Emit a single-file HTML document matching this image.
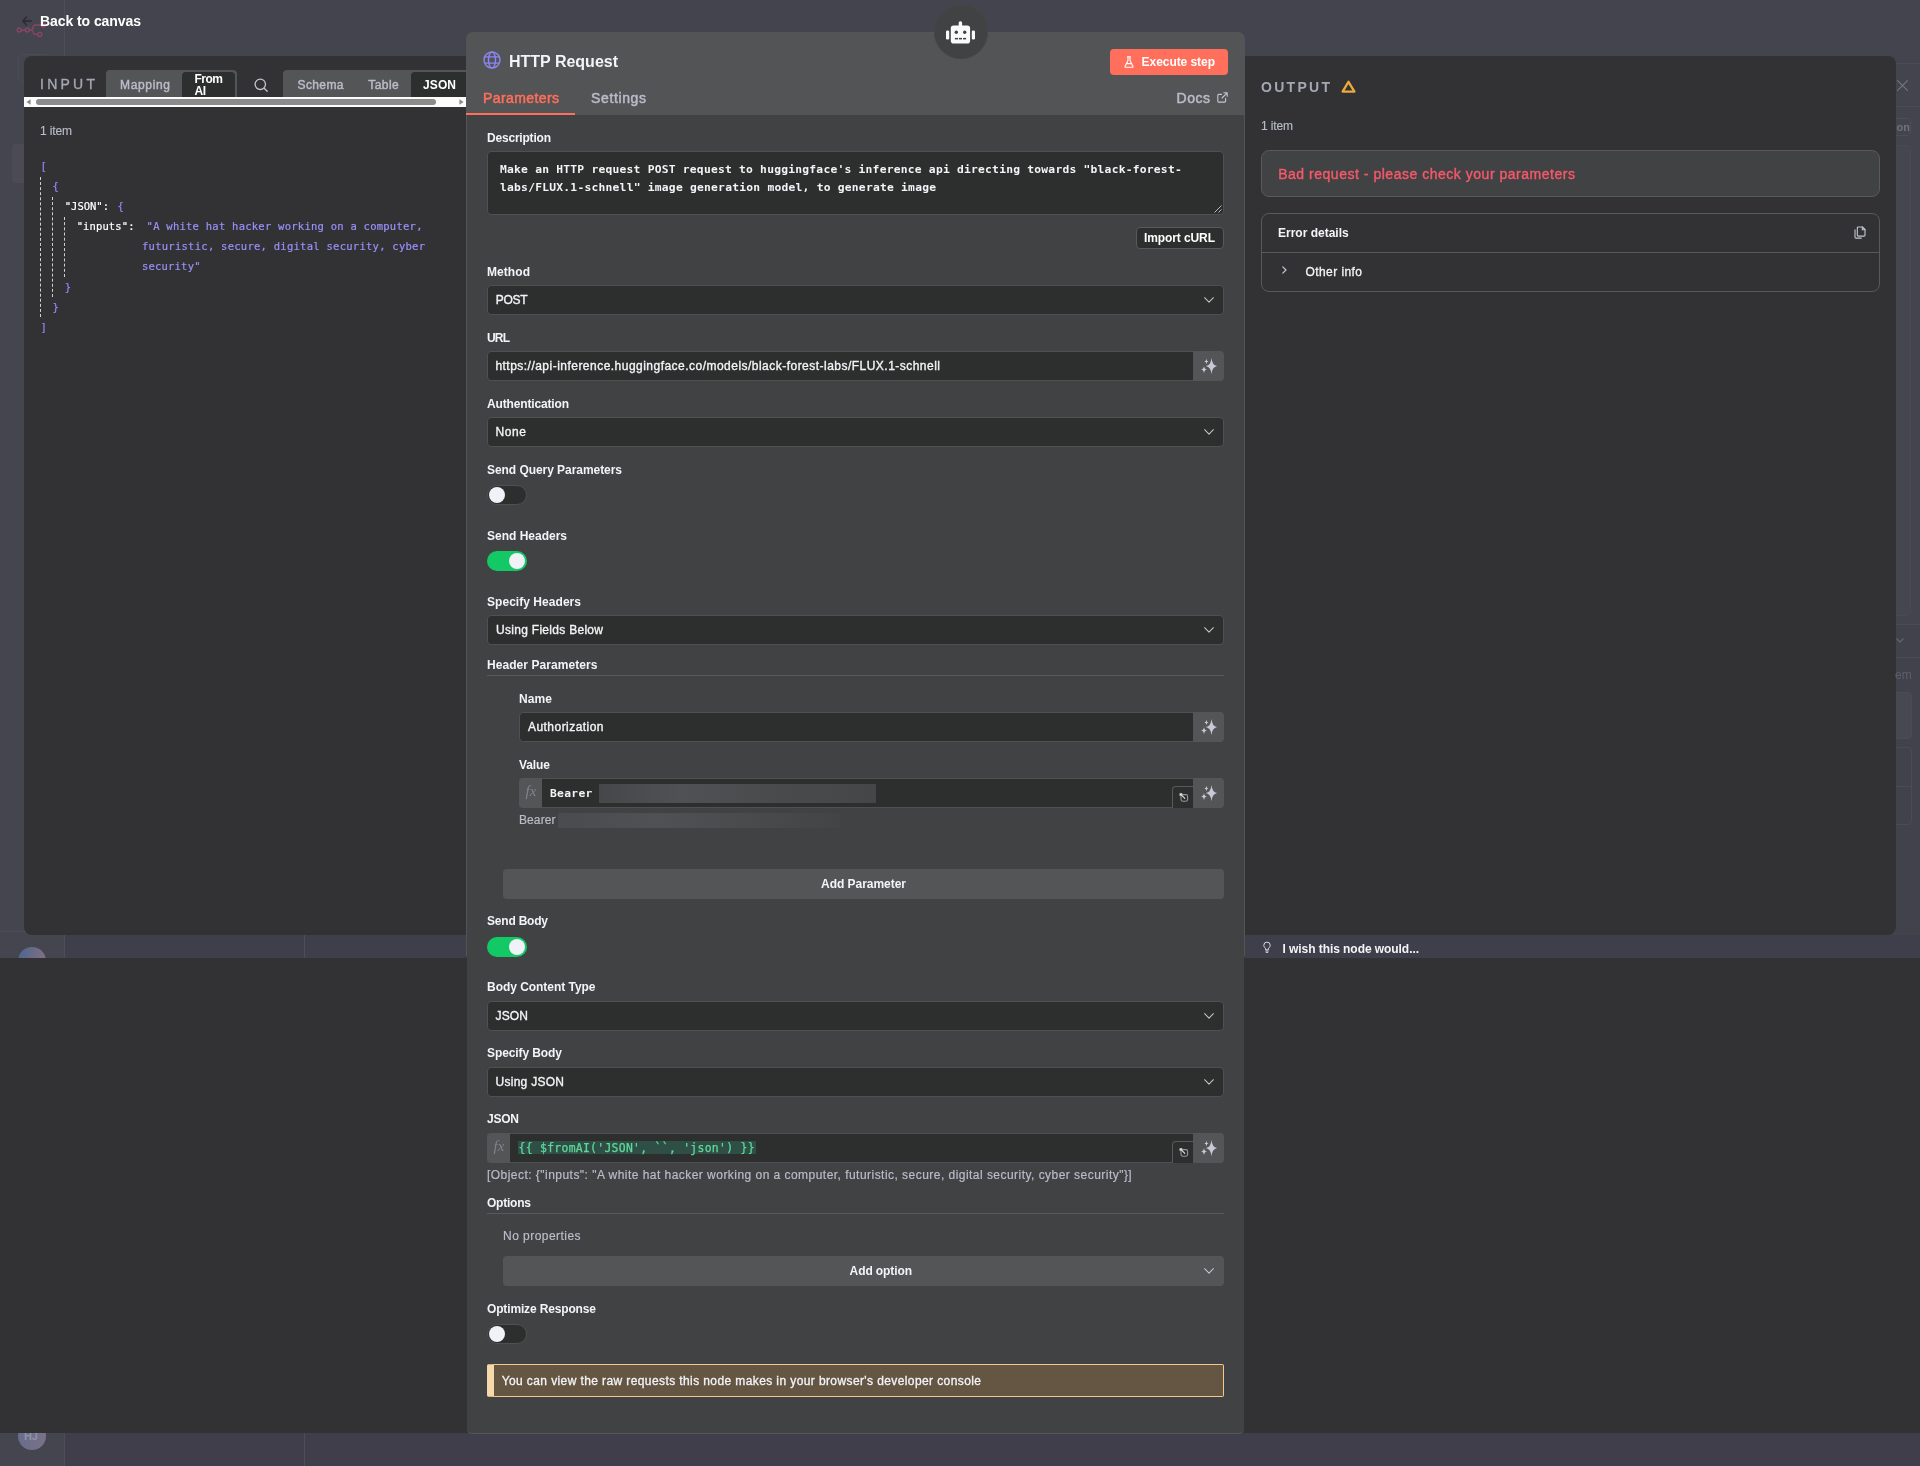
<!DOCTYPE html>
<html lang="en">
<head>
<meta charset="utf-8">
<title>HTTP Request - n8n</title>
<style>
html,body{margin:0;padding:0}
body{width:1920px;height:1466px;position:relative;overflow:hidden;background:#44444e;font-family:"Liberation Sans",sans-serif}
.a{position:absolute;box-sizing:border-box}
.t{position:absolute;white-space:pre;line-height:20px;height:20px}
svg{position:absolute;overflow:visible}
.inp{background:#2d2e2e;border:1px solid #4f5052;border-radius:4px}
.sel{background:#2d2e2e;border:1px solid #4f5052;border-radius:4px;left:487px;width:737px;height:30px}
.spk{background:#545557;border-radius:0 4px 4px 0;width:31px;height:30px;left:1193px}
.tg{width:40px;height:20px;border-radius:10px;left:487px}
.tg i{position:absolute;top:2px;width:16px;height:16px;border-radius:8px;background:#f1f2f8}
.off{background:#2d2e2e;border:1px solid #4f5052}.off i{left:1px;top:1px}
.on{background:#13c965}.on i{left:22px}
.hr{height:1px;background:#58595b;left:487px;width:737px}
.btn{background:#545557;border-radius:4px;left:503px;width:721px;height:30px}
.fx{background:#545557;border-radius:4px 0 0 4px;height:30px}
.opn{border:1px solid #58595b;border-right:0;border-bottom:0;border-radius:4px 0 0 0;background:#2d2e2e;left:1172px;width:21px;height:22px}
.blur{filter:blur(.3px)}
</style>
</head>
<body>
<!-- dimmed canvas background -->
<div class="a" style="left:0;top:0;width:64px;height:958px;background:#45454f"></div>
<div class="a" style="left:64px;top:0;width:1px;height:958px;background:#4d4d58"></div>
<div class="a" style="left:0;top:1433px;width:64px;height:33px;background:#45454f"></div>
<div class="a" style="left:65px;top:935px;width:1855px;height:23px;background:#3f3f4b"></div>
<div class="a" style="left:65px;top:1433px;width:1855px;height:33px;background:#3f3e4a"></div>
<div class="a" style="left:64px;top:1433px;width:1px;height:33px;background:#4d4d58"></div>
<div class="a" style="left:304px;top:935px;width:1px;height:23px;background:#4d4d58"></div>
<div class="a" style="left:304px;top:1433px;width:1px;height:33px;background:#4d4d58"></div>
<div class="a" style="left:0;top:931px;width:64px;height:1px;background:#4d4d58"></div>
<div class="a" style="left:18px;top:54px;width:30px;height:28px;border:1px solid #4b4b56;border-radius:4px"></div>
<div class="a" style="left:12px;top:144px;width:40px;height:39px;background:#4b4a55;border-radius:4px"></div>
<div class="a" style="left:1896px;top:63px;width:24px;height:1px;background:#4b4b56"></div>
<div class="a" style="left:1896px;top:106px;width:24px;height:1px;background:#4b4b56"></div>
<div class="a" style="left:1860px;top:118px;width:51px;height:18px;border:1px solid #4d4d58;border-radius:4px"></div>
<div class="a" style="left:1860px;top:145px;width:51px;height:471px;border:1px solid #4a4a55;background:#464650;border-radius:4px"></div>
<div class="a" style="left:1896px;top:625px;width:24px;height:310px;background:#42424d"></div>
<div class="a" style="left:1896px;top:624px;width:24px;height:1px;background:#4b4b56"></div>
<div class="a" style="left:1896px;top:657px;width:24px;height:1px;background:#4b4b56"></div>
<div class="a" style="left:1860px;top:692px;width:52px;height:47px;background:#484852;border:1px solid #4b4b56;border-radius:4px"></div>
<div class="a" style="left:1860px;top:747px;width:52px;height:78px;border:1px solid #4b4b56;border-radius:4px"></div>
<div class="a" style="left:1860px;top:786px;width:52px;height:1px;background:#4b4b56"></div>
<svg style="left:1895.5px;top:638px" width="8" height="5" viewBox="0 0 8 5" fill="none" stroke="#62626e" stroke-width="1.3"><path d="M0.5 0.5 4 4 7.5 0.5"/></svg>
<svg style="left:22px;top:16px" width="10" height="10" viewBox="0 0 10 10" fill="none" stroke="#2a2a2f" stroke-width="1.3" stroke-linecap="round" stroke-linejoin="round"><path d="M9.3 5H0.8M4.6 1 0.8 5 4.6 9"/></svg>
<!-- n8n logo (dim) -->
<svg style="left:0;top:0" width="64" height="48" viewBox="0 0 64 48" fill="none" stroke="#8a4661" stroke-width="1.3"><circle cx="19.2" cy="30" r="2"/><circle cx="27.3" cy="30" r="2"/><circle cx="39.8" cy="34.4" r="2"/><circle cx="43.3" cy="25" r="2"/><path d="M21.2 30h4.1M29.3 30h1.2q2.6 0 2.6-2.5 0-2.5 2.6-2.5h5.6M31.4 30.2q1.8 0.6 1.8 2.1 0 2.1 2.4 2.1h2.2"/></svg>
<!-- avatars -->
<div class="a" style="left:18px;top:947px;width:28px;height:11px;overflow:hidden"><div class="a" style="left:0;top:0;width:28px;height:28px;border-radius:14px;background:linear-gradient(100deg,#4a6690,#8c6f80)"></div></div>
<div class="a" style="left:18px;top:1433px;width:28px;height:17px;overflow:hidden"><div class="a" style="left:0;top:-11px;width:28px;height:28px;border-radius:14px;background:linear-gradient(100deg,#666d8a,#7b7189)"></div></div>
<div class="t" style="left:24px;top:1426px;font-size:11px;font-weight:700;color:#9092a6;letter-spacing:-.2px">HJ</div>

<!-- dark band -->
<div class="a" style="left:0;top:958px;width:1920px;height:475px;background:#323234"></div>

<!-- INPUT panel -->
<div class="a" style="left:24px;top:56px;width:450px;height:879px;background:#323234;border-radius:8px 0 0 8px"></div>
<div class="a" style="left:106px;top:70px;width:131px;height:30px;background:#545557;border-radius:4px 4px 0 0"></div>
<div class="a" style="left:182px;top:72px;width:53px;height:28px;background:#2d2e2e;border-radius:4px 4px 0 0"></div>
<div class="a" style="left:283px;top:70px;width:190px;height:30px;background:#545557;border-radius:4px 0 0 0"></div>
<div class="a" style="left:411px;top:72px;width:60px;height:28px;background:#2d2e2e;border-radius:4px 0 0 0"></div>
<svg style="left:254px;top:78px" width="14" height="14" viewBox="0 0 14 14" fill="none" stroke="#c3c6d2" stroke-width="1.3" stroke-linecap="round"><circle cx="6.3" cy="6.3" r="5.2"/><path d="M10.2 10.2 13.2 13.2"/></svg>
<!-- scrollbar -->
<div class="a" style="left:24px;top:97px;width:442px;height:10px;background:#fcfcfc"></div>
<div class="a" style="left:36px;top:99px;width:400px;height:6px;background:#8b8b8b;border-radius:3px"></div>
<svg style="left:26px;top:99px" width="5" height="6" viewBox="0 0 5 6"><path d="M4.6 0.2V5.8L0.4 3z" fill="#8b8b8b"/></svg>
<svg style="left:458.5px;top:99px" width="5" height="6" viewBox="0 0 5 6"><path d="M0.4 0.2V5.8L4.6 3z" fill="#8b8b8b"/></svg>
<!-- json guide lines -->
<div class="a" style="left:40px;top:177px;width:0;height:140px;border-left:1px dashed #cfcfd6"></div>
<div class="a" style="left:52px;top:197px;width:0;height:100px;border-left:1px dashed #cfcfd6"></div>
<div class="a" style="left:64px;top:217px;width:0;height:60px;border-left:1px dashed #cfcfd6"></div>

<!-- OUTPUT panel -->
<div class="a" style="left:1236px;top:56px;width:660px;height:879px;background:#323234;border-radius:0 8px 8px 0"></div>
<svg style="left:1340.6px;top:79.6px" width="15" height="13" viewBox="0 0 15 13" fill="none" stroke="#eda93c" stroke-width="2.3" stroke-linejoin="round"><path d="M7.5 1.8 13.4 11.6H1.6z"/></svg>
<div class="a" style="left:1261px;top:150px;width:619px;height:47px;background:#414244;border:1px solid #58595b;border-radius:8px"></div>
<div class="a" style="left:1261px;top:213px;width:619px;height:79px;border:1px solid #58595b;border-radius:8px"></div>
<div class="a" style="left:1262px;top:252px;width:617px;height:1px;background:#58595b"></div>
<svg style="left:1854px;top:226px" width="12" height="13" viewBox="0 0 12 13" fill="none" stroke="#c3c6d2" stroke-width="1.1" stroke-linejoin="round" stroke-linecap="round"><path d="M4.2 1h4.3l2.5 2.5v5.7a.9.9 0 0 1-.9.9H4.2a.9.9 0 0 1-.9-.9V1.9a.9.9 0 0 1 .9-.9z"/><path d="M8.3 1v2.7H11"/><path d="M1 3.8v7.4a.9.9 0 0 0 .9.9h5.4"/></svg>
<svg style="left:1281.7px;top:266.2px" width="5" height="8" viewBox="0 0 5 8" fill="none" stroke="#c3c6d2" stroke-width="1.2" stroke-linecap="round" stroke-linejoin="round"><path d="M0.8 0.8 4 4 0.8 7.2"/></svg>
<svg style="left:1896.5px;top:79.5px" width="11" height="11" viewBox="0 0 11 11" fill="none" stroke="#74747f" stroke-width="1.2" stroke-linecap="round"><path d="M0.6 0.6 10.4 10.4M10.4 0.6 0.6 10.4"/></svg>
<!-- wish -->
<svg style="left:1263px;top:940.5px" width="8" height="12" viewBox="0 0 8 12" fill="none" stroke="#d8d9e2" stroke-width="1" stroke-linecap="round" stroke-linejoin="round"><path d="M2.6 8.4V7.3C1.6 6.7 0.8 5.6 0.8 4.3a3.2 3.2 0 0 1 6.4 0c0 1.3-.8 2.4-1.8 3v1.1z"/><path d="M2.8 10h2.4M3.2 11.4h1.6"/></svg>

<!-- MAIN panel -->
<div class="a" style="left:466px;top:32px;width:779px;height:924px;background:#535456;border-radius:7px 7px 0 0"></div>
<div class="a" style="left:467px;top:115px;width:777px;height:1319px;background:#414244;border-bottom:1px solid #55565a;border-radius:0 0 5px 5px"></div>
<div class="a" style="left:466px;top:113px;width:109px;height:2px;background:#ff6f5c"></div>
<!-- robot badge -->
<div class="a" style="left:933.5px;top:4.3px;width:54.2px;height:54.4px;border-radius:50%;background:#414244;box-shadow:inset 0 0 0 .8px #47484b"></div>
<svg style="left:946px;top:20.6px" width="29" height="24" viewBox="0 0 29 24" fill="#fbfbfd"><rect x="12.7" y="0.2" width="3.4" height="6" rx="1.6"/><rect x="4.8" y="4.5" width="19.3" height="18.1" rx="2.8"/><rect x="0" y="9.5" width="3.2" height="9.1" rx="1.3"/><rect x="25.8" y="9.5" width="3.2" height="9.1" rx="1.3"/><circle cx="10.3" cy="11.2" r="1.7" fill="#414244"/><circle cx="18.7" cy="11.2" r="1.7" fill="#414244"/><rect x="8.9" y="16.9" width="3.1" height="1.5" fill="#414244"/><rect x="12.9" y="16.9" width="3.1" height="1.5" fill="#414244"/><rect x="17" y="16.9" width="3.1" height="1.5" fill="#414244"/></svg>
<!-- globe -->
<svg style="left:483px;top:51px" width="18" height="18" viewBox="0 0 18 18" fill="none" stroke="#8b85f6" stroke-width="1.4"><circle cx="9" cy="9" r="8"/><ellipse cx="9" cy="9" rx="3.5" ry="8"/><path d="M1.6 5.9h14.8M1.6 12.1h14.8" stroke-width="1.3"/></svg>
<!-- execute -->
<div class="a" style="left:1110px;top:49px;width:118px;height:26px;background:#ff6f5c;border-radius:4px"></div>
<svg style="left:1123.5px;top:56px" width="10" height="12" viewBox="0 0 10 12" fill="none" stroke="#fff" stroke-width="1.1" stroke-linecap="round" stroke-linejoin="round"><path d="M3.4 0.8h3.2M4 0.8v3.6L1 10.2a.7.7 0 0 0 .6 1h6.8a.7.7 0 0 0 .6-1L6 4.4V0.8"/><path d="M2.4 7.6h5.2"/></svg>
<!-- docs link icon -->
<svg style="left:1216.5px;top:91.5px" width="11" height="11" viewBox="0 0 11 11" fill="none" stroke="#c3c6d2" stroke-width="1.1" stroke-linecap="round" stroke-linejoin="round"><path d="M6.8 0.8h3.4v3.4M10.2 0.8 5 6M8.6 6.4v2.7a1 1 0 0 1-1 1H1.8a1 1 0 0 1-1-1V3.4a1 1 0 0 1 1-1h2.8"/></svg>

<!-- Description textarea -->
<div class="a inp" style="left:487px;top:151px;width:737px;height:64px"></div>
<svg style="left:1214px;top:205px" width="8" height="8" viewBox="0 0 8 8" stroke="#b5b6bc" stroke-width="1"><path d="M7.5 0.5 0.5 7.5M7.5 4.5 4.5 7.5"/></svg>
<div class="a" style="left:1136px;top:227px;width:88px;height:21.5px;background:#2d2e2e;border:1px solid #58595c;border-radius:4px"></div>

<!-- selects / inputs -->
<div class="a sel" style="top:285px"></div>
<div class="a inp" style="left:487px;top:351px;width:707px;height:30px;border-radius:4px 0 0 4px"></div>
<div class="a spk" style="top:351px"></div>
<div class="a sel" style="top:417px"></div>
<div class="a tg off" style="top:485px"><i></i></div>
<div class="a tg on" style="top:551px"><i></i></div>
<div class="a sel" style="top:615px"></div>
<div class="a hr" style="top:675px"></div>
<div class="a inp" style="left:519px;top:712px;width:675px;height:30px;border-radius:4px 0 0 4px"></div>
<div class="a spk" style="top:712px"></div>
<!-- value expression -->
<div class="a inp" style="left:519px;top:778px;width:675px;height:30px;border-radius:4px 0 0 4px"></div>
<div class="a fx" style="left:519px;top:778px;width:23px"></div>
<div class="a opn" style="top:786px"></div>
<div class="a spk" style="top:778px"></div>
<div class="a blur" style="left:599px;top:784px;width:277px;height:19px;background:linear-gradient(90deg,#464749,#505154 30%,#4a4b4d 60%,#454648)"></div>
<div class="a blur" style="left:558px;top:813px;width:282px;height:15px;background:linear-gradient(90deg,#4a4b4e,#505154 35%,#494a4c 70%,#434446)"></div>
<div class="a btn" style="top:869px"></div>
<div class="a tg on" style="top:937px"><i></i></div>
<div class="a sel" style="top:1001px"></div>
<div class="a sel" style="top:1067px"></div>
<!-- json expression -->
<div class="a inp" style="left:487px;top:1133px;width:707px;height:30px;border-radius:4px 0 0 4px"></div>
<div class="a fx" style="left:487px;top:1133px;width:23px"></div>
<div class="a" style="left:517.5px;top:1141px;width:238px;height:13px;background:#2f4f46"></div>
<div class="a opn" style="top:1141px"></div>
<div class="a spk" style="top:1133px"></div>
<div class="a hr" style="top:1213px"></div>
<div class="a btn" style="top:1256px"></div>
<div class="a tg off" style="top:1324px"><i></i></div>
<div class="a" style="left:487px;top:1364px;width:737px;height:33px;background:#645643;border:1px solid #f2c88d;border-left:7px solid #f6d9ab;border-radius:2px"></div>

<!-- chevrons -->
<svg style="left:1204px;top:297.0px" width="10" height="6" viewBox="0 0 10 6" fill="none" stroke="#c3c6d2" stroke-width="1.05" stroke-linecap="round" stroke-linejoin="round"><path d="M0.6 0.7 5 5.1 9.4 0.7"/></svg>
<svg style="left:1204px;top:429.0px" width="10" height="6" viewBox="0 0 10 6" fill="none" stroke="#c3c6d2" stroke-width="1.05" stroke-linecap="round" stroke-linejoin="round"><path d="M0.6 0.7 5 5.1 9.4 0.7"/></svg>
<svg style="left:1204px;top:627.0px" width="10" height="6" viewBox="0 0 10 6" fill="none" stroke="#c3c6d2" stroke-width="1.05" stroke-linecap="round" stroke-linejoin="round"><path d="M0.6 0.7 5 5.1 9.4 0.7"/></svg>
<svg style="left:1204px;top:1013.0px" width="10" height="6" viewBox="0 0 10 6" fill="none" stroke="#c3c6d2" stroke-width="1.05" stroke-linecap="round" stroke-linejoin="round"><path d="M0.6 0.7 5 5.1 9.4 0.7"/></svg>
<svg style="left:1204px;top:1079.0px" width="10" height="6" viewBox="0 0 10 6" fill="none" stroke="#c3c6d2" stroke-width="1.05" stroke-linecap="round" stroke-linejoin="round"><path d="M0.6 0.7 5 5.1 9.4 0.7"/></svg>
<svg style="left:1204px;top:1268.0px" width="10" height="6" viewBox="0 0 10 6" fill="none" stroke="#c3c6d2" stroke-width="1.05" stroke-linecap="round" stroke-linejoin="round"><path d="M0.6 0.7 5 5.1 9.4 0.7"/></svg>
<svg style="left:1193px;top:351px" width="31" height="30" viewBox="0 0 31 30"><path d="M18.50 6.90Q19.17 14.12 24.10 15.10Q19.17 16.08 18.50 23.30Q17.83 16.08 12.90 15.10Q17.83 14.12 18.50 6.90ZM11.00 14.90Q11.32 18.23 14.20 18.60Q11.32 18.97 11.00 22.30Q10.68 18.97 7.80 18.60Q10.68 18.23 11.00 14.90ZM13.40 7.80Q13.56 10.28 15.40 10.50Q13.56 10.72 13.40 13.20Q13.24 10.72 11.40 10.50Q13.24 10.28 13.40 7.80Z" fill="#c6c9d6"/></svg><svg style="left:1193px;top:712px" width="31" height="30" viewBox="0 0 31 30"><path d="M18.50 6.90Q19.17 14.12 24.10 15.10Q19.17 16.08 18.50 23.30Q17.83 16.08 12.90 15.10Q17.83 14.12 18.50 6.90ZM11.00 14.90Q11.32 18.23 14.20 18.60Q11.32 18.97 11.00 22.30Q10.68 18.97 7.80 18.60Q10.68 18.23 11.00 14.90ZM13.40 7.80Q13.56 10.28 15.40 10.50Q13.56 10.72 13.40 13.20Q13.24 10.72 11.40 10.50Q13.24 10.28 13.40 7.80Z" fill="#c6c9d6"/></svg><svg style="left:1193px;top:778px" width="31" height="30" viewBox="0 0 31 30"><path d="M18.50 6.90Q19.17 14.12 24.10 15.10Q19.17 16.08 18.50 23.30Q17.83 16.08 12.90 15.10Q17.83 14.12 18.50 6.90ZM11.00 14.90Q11.32 18.23 14.20 18.60Q11.32 18.97 11.00 22.30Q10.68 18.97 7.80 18.60Q10.68 18.23 11.00 14.90ZM13.40 7.80Q13.56 10.28 15.40 10.50Q13.56 10.72 13.40 13.20Q13.24 10.72 11.40 10.50Q13.24 10.28 13.40 7.80Z" fill="#c6c9d6"/></svg><svg style="left:1193px;top:1133px" width="31" height="30" viewBox="0 0 31 30"><path d="M18.50 6.90Q19.17 14.12 24.10 15.10Q19.17 16.08 18.50 23.30Q17.83 16.08 12.90 15.10Q17.83 14.12 18.50 6.90ZM11.00 14.90Q11.32 18.23 14.20 18.60Q11.32 18.97 11.00 22.30Q10.68 18.97 7.80 18.60Q10.68 18.23 11.00 14.90ZM13.40 7.80Q13.56 10.28 15.40 10.50Q13.56 10.72 13.40 13.20Q13.24 10.72 11.40 10.50Q13.24 10.28 13.40 7.80Z" fill="#c6c9d6"/></svg>
<svg style="left:1172px;top:786px" width="21" height="21" viewBox="0 0 21 21" fill="none" stroke-linecap="round" stroke-linejoin="round"><rect x="9" y="8.6" width="6.6" height="6.6" rx="1.6" stroke="#96979d" stroke-width="1.1"/><path d="M8.1 7.7 12.8 12.4M8.1 9.5V7.7h1.8" stroke="#e6e6ec" stroke-width="1.05"/></svg><svg style="left:1172px;top:1141px" width="21" height="21" viewBox="0 0 21 21" fill="none" stroke-linecap="round" stroke-linejoin="round"><rect x="9" y="8.6" width="6.6" height="6.6" rx="1.6" stroke="#96979d" stroke-width="1.1"/><path d="M8.1 7.7 12.8 12.4M8.1 9.5V7.7h1.8" stroke="#e6e6ec" stroke-width="1.05"/></svg>

<div class="a" style="left:0;top:0;width:1920px;height:1466px;will-change:transform"><div class="t" style="left:40.0px;top:11.1px;font-family:'Liberation Sans',sans-serif;font-size:14px;font-weight:700;color:#ffffff;letter-spacing:-0.073px;">Back to canvas</div>
<div class="t" style="left:40.0px;top:74.1px;font-family:'Liberation Sans',sans-serif;font-size:14px;font-weight:400;color:#a4a7b4;-webkit-text-stroke:0.35px #a4a7b4;letter-spacing:3.250px;">INPUT</div>
<div class="t" style="left:120.0px;top:74.8px;font-family:'Liberation Sans',sans-serif;font-size:12px;font-weight:400;color:#b9bcc9;-webkit-text-stroke:0.45px #b9bcc9;letter-spacing:0.661px;">Mapping</div>
<div class="t" style="left:194.5px;top:68.8px;font-family:'Liberation Sans',sans-serif;font-size:12px;font-weight:700;color:#fff;letter-spacing:-0.500px;">From</div>
<div class="t" style="left:194.5px;top:81.1px;font-family:'Liberation Sans',sans-serif;font-size:12px;font-weight:700;color:#fff;letter-spacing:-0.500px;">AI</div>
<div class="t" style="left:297.5px;top:74.8px;font-family:'Liberation Sans',sans-serif;font-size:12px;font-weight:400;color:#b9bcc9;-webkit-text-stroke:0.45px #b9bcc9;letter-spacing:0.394px;">Schema</div>
<div class="t" style="left:368.3px;top:74.8px;font-family:'Liberation Sans',sans-serif;font-size:12px;font-weight:400;color:#b9bcc9;-webkit-text-stroke:0.45px #b9bcc9;letter-spacing:0.428px;">Table</div>
<div class="t" style="left:423.0px;top:74.8px;font-family:'Liberation Sans',sans-serif;font-size:12px;font-weight:700;color:#fff;letter-spacing:0.104px;">JSON</div>
<div class="t" style="left:40.0px;top:120.8px;font-family:'Liberation Sans',sans-serif;font-size:12px;font-weight:400;color:#b9bcc9;-webkit-text-stroke:0.15px #b9bcc9;letter-spacing:-0.138px;">1 item</div>
<div class="t" style="left:509.0px;top:51.5px;font-family:'Liberation Sans',sans-serif;font-size:16px;font-weight:700;color:#f4f4f8;letter-spacing:-0.006px;">HTTP Request</div>
<div class="t" style="left:483.0px;top:88.1px;font-family:'Liberation Sans',sans-serif;font-size:14px;font-weight:400;color:#ff6f5c;-webkit-text-stroke:0.5px #ff6f5c;letter-spacing:0.405px;">Parameters</div>
<div class="t" style="left:591.0px;top:88.1px;font-family:'Liberation Sans',sans-serif;font-size:14px;font-weight:400;color:#b9bcc9;-webkit-text-stroke:0.5px #b9bcc9;letter-spacing:0.629px;">Settings</div>
<div class="t" style="left:1176.5px;top:87.8px;font-family:'Liberation Sans',sans-serif;font-size:14px;font-weight:400;color:#b9bcc9;-webkit-text-stroke:0.5px #b9bcc9;letter-spacing:0.531px;">Docs</div>
<div class="t" style="left:1141.6px;top:51.8px;font-family:'Liberation Sans',sans-serif;font-size:12px;font-weight:700;color:#fff;letter-spacing:-0.059px;">Execute step</div>
<div class="t" style="left:487.0px;top:127.8px;font-family:'Liberation Sans',sans-serif;font-size:12px;font-weight:700;color:#f4f4f8;letter-spacing:-0.202px;">Description</div>
<div class="t" style="left:487.0px;top:261.8px;font-family:'Liberation Sans',sans-serif;font-size:12px;font-weight:700;color:#f4f4f8;letter-spacing:0.069px;">Method</div>
<div class="t" style="left:487.0px;top:327.8px;font-family:'Liberation Sans',sans-serif;font-size:12px;font-weight:700;color:#f4f4f8;letter-spacing:-0.836px;">URL</div>
<div class="t" style="left:487.0px;top:393.8px;font-family:'Liberation Sans',sans-serif;font-size:12px;font-weight:700;color:#f4f4f8;letter-spacing:-0.154px;">Authentication</div>
<div class="t" style="left:487.0px;top:460.2px;font-family:'Liberation Sans',sans-serif;font-size:12px;font-weight:700;color:#f4f4f8;letter-spacing:-0.054px;">Send Query Parameters</div>
<div class="t" style="left:487.0px;top:526.1px;font-family:'Liberation Sans',sans-serif;font-size:12px;font-weight:700;color:#f4f4f8;letter-spacing:-0.004px;">Send Headers</div>
<div class="t" style="left:487.0px;top:592.1px;font-family:'Liberation Sans',sans-serif;font-size:12px;font-weight:700;color:#f4f4f8;letter-spacing:0.044px;">Specify Headers</div>
<div class="t" style="left:487.0px;top:654.8px;font-family:'Liberation Sans',sans-serif;font-size:12px;font-weight:700;color:#f4f4f8;letter-spacing:0.068px;">Header Parameters</div>
<div class="t" style="left:519.0px;top:689.1px;font-family:'Liberation Sans',sans-serif;font-size:12px;font-weight:700;color:#f4f4f8;letter-spacing:0.104px;">Name</div>
<div class="t" style="left:519.0px;top:755.0px;font-family:'Liberation Sans',sans-serif;font-size:12px;font-weight:700;color:#f4f4f8;letter-spacing:-0.090px;">Value</div>
<div class="t" style="left:487.0px;top:910.8px;font-family:'Liberation Sans',sans-serif;font-size:12px;font-weight:700;color:#f4f4f8;letter-spacing:-0.209px;">Send Body</div>
<div class="t" style="left:487.0px;top:976.8px;font-family:'Liberation Sans',sans-serif;font-size:12px;font-weight:700;color:#f4f4f8;letter-spacing:-0.038px;">Body Content Type</div>
<div class="t" style="left:487.0px;top:1042.8px;font-family:'Liberation Sans',sans-serif;font-size:12px;font-weight:700;color:#f4f4f8;letter-spacing:-0.094px;">Specify Body</div>
<div class="t" style="left:487.0px;top:1109.1px;font-family:'Liberation Sans',sans-serif;font-size:12px;font-weight:700;color:#f4f4f8;letter-spacing:-0.229px;">JSON</div>
<div class="t" style="left:487.0px;top:1193.1px;font-family:'Liberation Sans',sans-serif;font-size:12px;font-weight:700;color:#f4f4f8;letter-spacing:-0.221px;">Options</div>
<div class="t" style="left:487.0px;top:1298.8px;font-family:'Liberation Sans',sans-serif;font-size:12px;font-weight:700;color:#f4f4f8;letter-spacing:-0.147px;">Optimize Response</div>
<div class="t" style="left:495.7px;top:290.0px;font-family:'Liberation Sans',sans-serif;font-size:12px;font-weight:400;color:#f4f4f8;-webkit-text-stroke:0.35px #f4f4f8;letter-spacing:-0.291px;">POST</div>
<div class="t" style="left:495.4px;top:356.0px;font-family:'Liberation Sans',sans-serif;font-size:12px;font-weight:400;color:#f4f4f8;-webkit-text-stroke:0.35px #f4f4f8;letter-spacing:0.476px;">https://api-inference.huggingface.co/models/black-forest-labs/FLUX.1-schnell</div>
<div class="t" style="left:495.5px;top:422.0px;font-family:'Liberation Sans',sans-serif;font-size:12px;font-weight:400;color:#f4f4f8;-webkit-text-stroke:0.35px #f4f4f8;letter-spacing:0.604px;">None</div>
<div class="t" style="left:496.0px;top:620.0px;font-family:'Liberation Sans',sans-serif;font-size:12px;font-weight:400;color:#f4f4f8;-webkit-text-stroke:0.35px #f4f4f8;letter-spacing:0.291px;">Using Fields Below</div>
<div class="t" style="left:528.0px;top:716.8px;font-family:'Liberation Sans',sans-serif;font-size:12px;font-weight:400;color:#f4f4f8;-webkit-text-stroke:0.35px #f4f4f8;letter-spacing:0.454px;">Authorization</div>
<div class="t" style="left:495.5px;top:1006.0px;font-family:'Liberation Sans',sans-serif;font-size:12px;font-weight:400;color:#f4f4f8;-webkit-text-stroke:0.35px #f4f4f8;letter-spacing:0.161px;">JSON</div>
<div class="t" style="left:495.5px;top:1072.0px;font-family:'Liberation Sans',sans-serif;font-size:12px;font-weight:400;color:#f4f4f8;-webkit-text-stroke:0.35px #f4f4f8;letter-spacing:0.274px;">Using JSON</div>
<div class="t" style="left:821.0px;top:873.8px;font-family:'Liberation Sans',sans-serif;font-size:12px;font-weight:700;color:#f4f4f8;letter-spacing:-0.031px;">Add Parameter</div>
<div class="t" style="left:849.6px;top:1261.0px;font-family:'Liberation Sans',sans-serif;font-size:12px;font-weight:700;color:#f4f4f8;letter-spacing:-0.101px;">Add option</div>
<div class="t" style="left:503.0px;top:1225.8px;font-family:'Liberation Sans',sans-serif;font-size:12px;font-weight:400;color:#b9bcc9;-webkit-text-stroke:0.2px #b9bcc9;letter-spacing:0.463px;">No properties</div>
<div class="t" style="left:519.0px;top:810.2px;font-family:'Liberation Sans',sans-serif;font-size:12px;font-weight:400;color:#b9bcc9;-webkit-text-stroke:0.2px #b9bcc9;letter-spacing:0.094px;">Bearer</div>
<div class="t" style="left:487.0px;top:1164.6px;font-family:'Liberation Sans',sans-serif;font-size:12px;font-weight:400;color:#b9bcc9;-webkit-text-stroke:0.2px #b9bcc9;letter-spacing:0.464px;">[Object: {"inputs": "A white hat hacker working on a computer, futuristic, secure, digital security, cyber security"}]</div>
<div class="t" style="left:501.7px;top:1370.8px;font-family:'Liberation Sans',sans-serif;font-size:12px;font-weight:400;color:#f4f4f8;-webkit-text-stroke:0.3px #f4f4f8;letter-spacing:0.398px;">You can view the raw requests this node makes in your browser's developer console</div>
<div class="t" style="left:1144.0px;top:227.8px;font-family:'Liberation Sans',sans-serif;font-size:12px;font-weight:700;color:#fff;letter-spacing:-0.100px;">Import cURL</div>
<div class="t" style="left:500.0px;top:160.1px;font-family:'DejaVu Sans Mono','Liberation Mono',monospace;font-size:11.3px;font-weight:700;color:#f4f4f8;letter-spacing:0.229px;">Make an HTTP request POST request to huggingface's inference api directing towards "black-forest-</div>
<div class="t" style="left:500.0px;top:178.1px;font-family:'DejaVu Sans Mono','Liberation Mono',monospace;font-size:11.3px;font-weight:700;color:#f4f4f8;letter-spacing:0.235px;">labs/FLUX.1-schnell" image generation model, to generate image</div>
<div class="t" style="left:550.0px;top:784.1px;font-family:'DejaVu Sans Mono','Liberation Mono',monospace;font-size:11.3px;font-weight:700;color:#f4f4f8;letter-spacing:0.317px;">Bearer</div>
<div class="t" style="left:518.5px;top:1138.0px;font-family:'DejaVu Sans Mono','Liberation Mono',monospace;font-size:11.4px;font-weight:400;color:#5fd99b;-webkit-text-stroke:0.25px #5fd99b;letter-spacing:0.303px;">{{ $fromAI('JSON', ``, 'json') }}</div>
<div class="t" style="left:525.5px;top:781.3px;font-family:'Liberation Serif',serif;font-size:15px;font-weight:400;color:#80828f;font-style:italic;">fx</div>
<div class="t" style="left:493.5px;top:1136.3px;font-family:'Liberation Serif',serif;font-size:15px;font-weight:400;color:#80828f;font-style:italic;">fx</div>
<div class="t" style="left:40.5px;top:155.9px;font-family:'DejaVu Sans Mono','Liberation Mono',monospace;font-size:10.5px;font-weight:400;color:#8f88f7;-webkit-text-stroke:0.2px #8f88f7;">[</div>
<div class="t" style="left:52.6px;top:175.9px;font-family:'DejaVu Sans Mono','Liberation Mono',monospace;font-size:10.5px;font-weight:400;color:#8f88f7;-webkit-text-stroke:0.2px #8f88f7;">{</div>
<div class="t" style="left:64.8px;top:195.9px;font-family:'DejaVu Sans Mono','Liberation Mono',monospace;font-size:10.5px;font-weight:400;color:#fff;-webkit-text-stroke:0.2px #fff;letter-spacing:-0.011px;">"JSON":</div>
<div class="t" style="left:117.5px;top:195.9px;font-family:'DejaVu Sans Mono','Liberation Mono',monospace;font-size:10.5px;font-weight:400;color:#8f88f7;-webkit-text-stroke:0.2px #8f88f7;">{</div>
<div class="t" style="left:76.7px;top:215.9px;font-family:'DejaVu Sans Mono','Liberation Mono',monospace;font-size:10.5px;font-weight:400;color:#fff;-webkit-text-stroke:0.2px #fff;letter-spacing:0.112px;">"inputs":</div>
<div class="t" style="left:146.6px;top:215.9px;font-family:'DejaVu Sans Mono','Liberation Mono',monospace;font-size:10.5px;font-weight:400;color:#9990fa;-webkit-text-stroke:0.2px #9990fa;letter-spacing:0.253px;">"A white hat hacker working on a computer,</div>
<div class="t" style="left:142.0px;top:235.9px;font-family:'DejaVu Sans Mono','Liberation Mono',monospace;font-size:10.5px;font-weight:400;color:#9990fa;-webkit-text-stroke:0.2px #9990fa;letter-spacing:0.266px;">futuristic, secure, digital security, cyber</div>
<div class="t" style="left:142.0px;top:256.4px;font-family:'DejaVu Sans Mono','Liberation Mono',monospace;font-size:10.5px;font-weight:400;color:#9990fa;-webkit-text-stroke:0.2px #9990fa;letter-spacing:0.199px;">security"</div>
<div class="t" style="left:64.8px;top:276.9px;font-family:'DejaVu Sans Mono','Liberation Mono',monospace;font-size:10.5px;font-weight:400;color:#8f88f7;-webkit-text-stroke:0.2px #8f88f7;">}</div>
<div class="t" style="left:52.6px;top:296.9px;font-family:'DejaVu Sans Mono','Liberation Mono',monospace;font-size:10.5px;font-weight:400;color:#8f88f7;-webkit-text-stroke:0.2px #8f88f7;">}</div>
<div class="t" style="left:40.5px;top:316.9px;font-family:'DejaVu Sans Mono','Liberation Mono',monospace;font-size:10.5px;font-weight:400;color:#8f88f7;-webkit-text-stroke:0.2px #8f88f7;">]</div>
<div class="t" style="left:1261.0px;top:76.6px;font-family:'Liberation Sans',sans-serif;font-size:14px;font-weight:700;color:#a4a7b4;letter-spacing:2.288px;">OUTPUT</div>
<div class="t" style="left:1261.0px;top:116.1px;font-family:'Liberation Sans',sans-serif;font-size:12px;font-weight:400;color:#b9bcc9;-webkit-text-stroke:0.15px #b9bcc9;letter-spacing:-0.138px;">1 item</div>
<div class="t" style="left:1278.2px;top:164.1px;font-family:'Liberation Sans',sans-serif;font-size:14px;font-weight:400;color:#f4596a;-webkit-text-stroke:0.4px #f4596a;letter-spacing:0.520px;">Bad request - please check your parameters</div>
<div class="t" style="left:1278.0px;top:223.1px;font-family:'Liberation Sans',sans-serif;font-size:12px;font-weight:700;color:#f4f4f8;letter-spacing:-0.000px;">Error details</div>
<div class="t" style="left:1305.5px;top:261.5px;font-family:'Liberation Sans',sans-serif;font-size:12px;font-weight:400;color:#f4f4f8;-webkit-text-stroke:0.3px #f4f4f8;letter-spacing:0.422px;">Other info</div>
<div class="t" style="left:1282.5px;top:939.1px;font-family:'Liberation Sans',sans-serif;font-size:12px;font-weight:700;color:#f4f4f8;letter-spacing:-0.062px;">I wish this node would...</div>
<div class="t" style="left:1896.5px;top:117.2px;font-family:'Liberation Sans',sans-serif;font-size:11px;font-weight:700;color:#71717d;">on</div>
<div class="t" style="left:1895.0px;top:665.3px;font-family:'Liberation Sans',sans-serif;font-size:12px;font-weight:400;color:#5f5f6b;">em</div></div>
</body>
</html>
